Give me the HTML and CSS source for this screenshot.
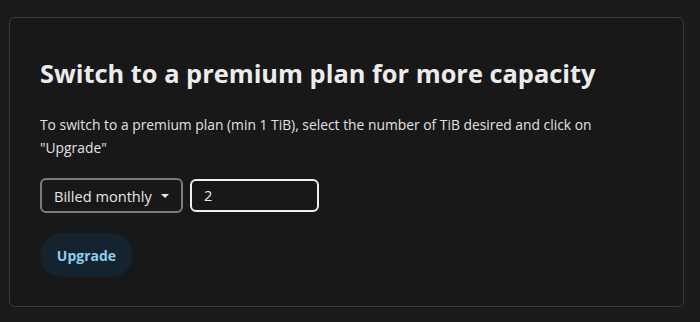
FILE: index.html
```html
<!DOCTYPE html>
<html lang="en">
<head>
<meta charset="utf-8">
<title>Upgrade</title>
<link rel="stylesheet" href="styles.css">
</head>
<body>
<section class="card">
  <h1 class="title">Switch to a premium plan for more capacity</h1>
  <p class="desc">To switch to a premium plan (min 1 TiB), select the number of TiB desired and click on "Upgrade"</p>
  <div class="controls">
    <div class="select">
      <span class="select-label">Billed monthly</span>
      <svg class="caret" width="8" height="4" viewBox="0 0 8 4"><path d="M0 0h8L4 4z" fill="#e8e8e8"/></svg>
    </div>
    <input class="qty" type="text" value="2">
  </div>
  <button class="upgrade">Upgrade</button>
</section>
</body>
</html>
```
FILE: styles.css
```css
html, body {
  margin: 0;
  padding: 0;
  background: #1b1b1b;
}
body {
  font-family: "Open Sans", "Noto Sans", sans-serif;
  color: #e6e6e6;
  padding: 17px 16px 15px 9px;
}
.card {
  box-sizing: border-box;
  height: 290px;
  background: #181818;
  border: 1px solid #3a3a3a;
  border-radius: 6px;
  padding: 35px 30px 0 30px;
}
.title {
  margin: 0;
  font-size: 25.4px;
  font-weight: 700;
  line-height: 40px;
  color: #ececec;
  letter-spacing: 0;
}
.desc {
  margin: 20px 0 0 0;
  font-size: 13.85px;
  line-height: 23px;
  color: #e2e2e2;
}
.controls {
  display: flex;
  align-items: center;
  gap: 7px;
  margin-top: 19px;
}
.select {
  box-sizing: border-box;
  width: 143px;
  height: 35px;
  border: 2px solid #7c7c7c;
  border-radius: 6px;
  display: flex;
  align-items: center;
  padding: 0 6px 0 12px;
  gap: 9px;
  font-size: 14.6px;
  color: #e6e6e6;
}
.select-label {
  white-space: nowrap;
  flex-shrink: 0;
}
.caret { display: block; flex-shrink: 0; }
.qty {
  box-sizing: border-box;
  width: 129px;
  height: 33px;
  border: 2px solid #f0f0f0;
  border-radius: 6px;
  background: transparent;
  color: #ececec;
  font-family: inherit;
  font-size: 14.5px;
  padding: 0 12px;
  outline: none;
}
.upgrade {
  display: block;
  margin-top: 20px;
  box-sizing: border-box;
  width: 93px;
  height: 44px;
  border: none;
  border-radius: 22px;
  background: #14232d;
  color: #8ecdf2;
  font-family: inherit;
  font-weight: 700;
  font-size: 14px;
  padding: 0;
}
```
